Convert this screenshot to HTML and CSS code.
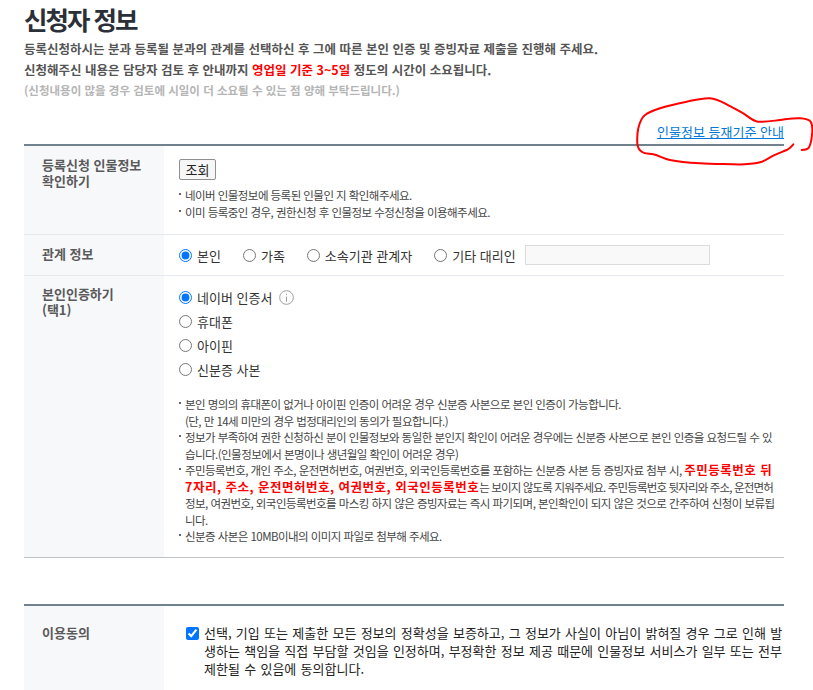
FILE: index.html
```html
<!DOCTYPE html>
<html lang="ko">
<head>
<meta charset="utf-8">
<title>신청자 정보</title>
<link rel="stylesheet" href="styles.css">
</head>
<body>
<main class="page">
  <h1 class="title">신청자 정보</h1>
  <p class="lead">등록신청하시는 분과 등록될 분과의 관계를 선택하신 후 그에 따른 본인 인증 및 증빙자료 제출을 진행해 주세요.</p>
  <p class="lead">신청해주신 내용은 담당자 검토 후 안내까지 <span class="red">영업일 기준 3~5일</span> 정도의 시간이 소요됩니다.</p>
  <p class="lead muted">(신청내용이 많을 경우 검토에 시일이 더 소요될 수 있는 점 양해 부탁드립니다.)</p>
  <div class="linkrow"><a class="guide" href="#">인물정보 등재기준 안내</a></div>

  <section class="table">
    <div class="row row-check">
      <div class="head">등록신청 인물정보<br>확인하기</div>
      <div class="cell">
        <button class="btn" type="button">조회</button>
        <ul class="notes notes-check">
          <li>네이버 인물정보에 등록된 인물인 지 확인해주세요.</li>
          <li>이미 등록중인 경우, 권한신청 후 인물정보 수정신청을 이용해주세요.</li>
        </ul>
      </div>
    </div>
    <div class="row row-rel">
      <div class="head">관계 정보</div>
      <div class="cell relations">
        <label class="opt"><input type="radio" name="rel" checked>본인</label>
        <label class="opt"><input type="radio" name="rel">가족</label>
        <label class="opt"><input type="radio" name="rel">소속기관 관계자</label>
        <label class="opt"><input type="radio" name="rel">기타 대리인</label>
        <input class="etc" type="text" aria-label="기타 대리인">
      </div>
    </div>
    <div class="row row-auth">
      <div class="head">본인인증하기<br>(택1)</div>
      <div class="cell">
        <div class="auths">
          <label class="opt"><input type="radio" name="auth" checked>네이버 인증서
            <svg class="info" viewBox="0 0 16 16" width="15" height="15" aria-hidden="true"><circle cx="8" cy="8" r="7.3" fill="none" stroke="#999" stroke-width="1"/><rect x="7.5" y="7" width="1" height="5.5" fill="#999"/><rect x="7.5" y="4" width="1" height="1.4" fill="#999"/></svg>
          </label>
          <label class="opt"><input type="radio" name="auth">휴대폰</label>
          <label class="opt"><input type="radio" name="auth">아이핀</label>
          <label class="opt"><input type="radio" name="auth">신분증 사본</label>
        </div>
        <ul class="notes notes-auth">
          <li>본인 명의의 휴대폰이 없거나 아이핀 인증이 어려운 경우 신분증 사본으로 본인 인증이 가능합니다.<br>(단, 만 14세 미만의 경우 법정대리인의 동의가 필요합니다.)</li>
          <li>정보가 부족하여 권한 신청하신 분이 인물정보와 동일한 분인지 확인이 어려운 경우에는 신분증 사본으로 본인 인증을 요청드릴 수 있<br>습니다.(인물정보에서 본명이나 생년월일 확인이 어려운 경우)</li>
          <li>주민등록번호, 개인 주소, 운전면허번호, 여권번호, 외국인등록번호를 포함하는 신분증 사본 등 증빙자료 첨부 시, <strong class="red">주민등록번호 뒤<br>7자리, 주소, 운전면허번호, 여권번호, 외국인등록번호</strong><span class="tight">는 보이지 않도록 지워주세요. 주민등록번호 뒷자리와 주소, 운전면허</span><br>정보, 여권번호, 외국인등록번호를 마스킹 하지 않은 증빙자료는 즉시 파기되며, 본인확인이 되지 않은 것으로 간주하여 신청이 보류됩<br>니다.</li>
          <li>신분증 사본은 10MB이내의 이미지 파일로 첨부해 주세요.</li>
        </ul>
      </div>
    </div>
  </section>

  <section class="table table-agree">
    <div class="row row-agree">
      <div class="head">이용동의</div>
      <div class="cell">
        <label class="agree"><input type="checkbox" checked><span>선택, 기입 또는 제출한 모든 정보의 정확성을 보증하고, 그 정보가 사실이 아님이 밝혀질 경우 그로 인해 발생하는 책임을 직접 부담할 것임을 인정하며, 부정확한 정보 제공 때문에 인물정보 서비스가 일부 또는 전부 제한될 수 있음에 동의합니다.</span></label>
      </div>
    </div>
  </section>
</main>
<svg class="scribble" width="813" height="690" viewBox="0 0 813 690" aria-hidden="true">
  <path d="M793.3 144.3C791 147 789 149 786.7 150C782 152 778 153.5 773.3 155.7C768 158.5 765 161 760 162.3C751 164.5 742 164.6 733.3 164.3C722 164 711 164 700 163.3C690 162.7 680 162 670 160C664 158.8 659 155.5 653.3 154.3C649 153.4 645 154 641.7 151.7C638.5 149.5 637.6 147 637.3 143.3C637 138 637.2 133 638.3 128.3C639.5 123 641 118 645 115C649 112 654 110.3 660 108.3C668 105.7 678 103.5 686.7 101.7C694 100.2 703 97.8 710 98.3C716 98.8 721 101.5 726.7 104.3C732 107 738 110.5 743.3 113.3C748 116 752 121 758.3 121.7C765 122.3 773 120.8 780 120C787 119.2 793 118 800 118.3C804 118.5 808.5 119 810.7 121.7C812.5 124.5 812.6 130 812 135C811.5 140 811 145 808.3 148.3C806.5 150 804 150 801.7 150" fill="none" stroke="#f00" stroke-width="2" stroke-linecap="round" stroke-linejoin="round"/>
</svg>
</body>
</html>
```

FILE: styles.css
```css
* { box-sizing: border-box; }
html, body { margin: 0; padding: 0; height: 690px; overflow: hidden; background: #fff; }
body {
  position: relative;
  font-family: "Noto Sans CJK KR", "Noto Sans", "Liberation Sans", sans-serif;
  color: #333;
}
.page { width: 784px; padding: 0 0 0 24px; }
.title {
  margin: 0;
  padding-top: 1px;
  font-size: 25.5px;
  line-height: 36px;
  font-weight: 700;
  letter-spacing: -2px;
  color: #2b2f38;
}
.lead {
  margin: 0;
  font-size: 12.5px;
  line-height: 20.5px;
  font-weight: 700;
  color: #555;
}
.lead:first-of-type { margin-top: 2px; }
.muted { font-size: 11.5px; color: #b5b5b5; font-weight: 700; }
.red { color: #f00; }
.linkrow {
  display: flex;
  justify-content: flex-end;
  height: 43.5px;
  padding-top: 22px;
}
.guide {
  font-size: 13px;
  line-height: 18px;
  color: #0078d7;
  text-decoration: underline;
}
.table { border-top: 2px solid #6f828d; }
.row { display: grid; grid-template-columns: 140px 1fr; }
.head {
  background: #f7f8fa;
  padding: 11px 0 0 18px;
  font-size: 13px;
  line-height: 16px;
  font-weight: 700;
  color: #5a5a5a;
}
.cell { padding-left: 15px; font-size: 13px; color: #333; }
.row-check { height: 89px; border-bottom: 1px solid #e5e8ec; }
.row-check .cell { padding-top: 13px; }
.row-rel { height: 41px; border-bottom: 1px solid #e5e8ec; }
.row-rel .head { padding-top: 11px; }
.row-auth { height: 282px; border-bottom: 1px solid #bfc3c6; }
.row-auth .head { padding-top: 10px; }
.row-auth .cell { padding-top: 9px; }
.btn {
  display: block;
  width: 37px;
  height: 21px;
  padding: 0;
  font: inherit;
  line-height: 18px;
  color: #222;
  background: #f6f6f6;
  border: 1px solid #8f8f8f;
  border-radius: 2px;
}
.notes {
  list-style: none;
  margin: 0;
  padding: 0;
  font-size: 11.5px;
  line-height: 16.5px;
  letter-spacing: -0.55px;
  color: #444;
}
.notes strong { font-size: 12.5px; letter-spacing: 0.5px; line-height: 16px; }
.notes .tight { letter-spacing: -0.85px; }
.notes li { position: relative; padding-left: 6px; }
.notes li::before {
  content: "";
  position: absolute;
  left: 0;
  top: 6px;
  width: 2px;
  height: 2px;
  background: #666;
}
.notes-check { margin-top: 7px; }
.notes-check li { line-height: 17px; }
.notes-auth { margin-top: 15px; width: 612px; }
.opt {
  display: flex;
  align-items: center;
  height: 24px;
  font-size: 13px;
  color: #333;
}
.opt input {
  appearance: auto;
  width: 13px;
  height: 13px;
  margin: 0 5px 0 0;
  accent-color: #0075ff;
}
.relations { display: flex; align-items: center; padding-top: 0; }
.relations .opt { margin-right: 22px; }
.relations .opt:nth-child(4) { margin-right: 9px; }
.etc {
  width: 185px;
  height: 20px;
  padding: 0;
  background: #f9f9f9;
  border: 1px solid #dcdcdc;
}
.auths { display: flex; flex-direction: column; }
.info { margin-left: 7px; }
.table-agree { margin-top: 45.5px; }
.row-agree { height: 86px; }
.row-agree .head { padding-top: 19px; }
.row-agree .cell { padding: 18px 0 0 22px; }
.agree { display: flex; align-items: flex-start; font-size: 13px; line-height: 18.3px; word-spacing: 0.65px; color: #222; }
.agree input {
  flex: none;
  width: 13px;
  height: 13px;
  margin: 3px 5px 0 0;
  accent-color: #0075ff;
}
.scribble { position: absolute; left: 0; top: 0; pointer-events: none; }
```
